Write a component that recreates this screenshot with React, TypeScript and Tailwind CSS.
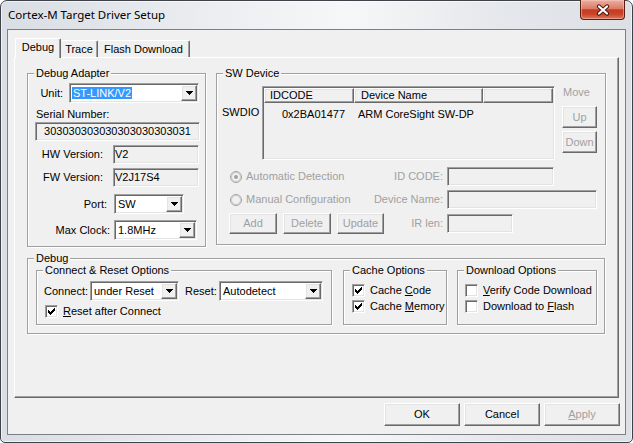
import React from 'react';

const raised =
  'border border-t-white border-l-white border-r-[#696969] border-b-[#696969] shadow-[inset_-1px_-1px_0_#a0a0a0,inset_1px_1px_0_#e3e3e3]';
const sunken =
  'border border-t-[#a0a0a0] border-l-[#a0a0a0] border-r-white border-b-white shadow-[inset_1px_1px_0_#696969,inset_-1px_-1px_0_#e3e3e3]';

const checkRows = ['......#', '.....##', '#...###', '##.###.', '#####..', '.###...', '..#....'];

function Group({ label, className = '', children }: { label: string; className?: string; children?: React.ReactNode }) {
  return (
    <div className={`relative shrink-0 border border-[#a0a0a0] shadow-[inset_1px_1px_0_#fff,1px_1px_0_#fff] ${className}`}>
      <span className="absolute -top-[7px] left-[6px] bg-[#f0f0f0] px-[2px] whitespace-nowrap">{label}</span>
      {children}
    </div>
  );
}

function Arrow() {
  return (
    <svg width="7" height="4" viewBox="0 0 7 4" shapeRendering="crispEdges">
      <path d="M0 0h7v1h-1v1h-1v1h-1v1h-1v-1h-1v-1h-1v-1h-1z" fill="#000" />
    </svg>
  );
}

function Combo({ className = '', children }: { className?: string; children: React.ReactNode }) {
  return (
    <div className={`${sunken} flex h-[20px] shrink-0 items-center bg-white p-px ${className}`}>
      <div className="flex-1 overflow-hidden whitespace-nowrap pl-[2px]">{children}</div>
      <div className={`${raised} flex h-[16px] w-[16px] items-center justify-center bg-[#f0f0f0]`}>
        <Arrow />
      </div>
    </div>
  );
}

function TextBox({ className = '', children }: { className?: string; children?: React.ReactNode }) {
  return (
    <div className={`${sunken} flex h-[19px] shrink-0 items-center whitespace-nowrap bg-[#f0f0f0] px-[2px] ${className}`}>
      {children}
    </div>
  );
}

function Btn({ className = '', disabled, children }: { className?: string; disabled?: boolean; children: React.ReactNode }) {
  return (
    <div
      className={`${raised} flex shrink-0 items-center justify-center bg-[#f0f0f0] ${disabled ? 'text-[#a0a0a0]' : 'text-black'} ${className}`}
    >
      {children}
    </div>
  );
}

function Check({ checked }: { checked?: boolean }) {
  return (
    <div className={`${sunken} flex h-[13px] w-[13px] shrink-0 items-center justify-center bg-white`}>
      {checked && (
        <svg width="7" height="7" viewBox="0 0 7 7" shapeRendering="crispEdges">
          {checkRows.map((row, y) =>
            row.split('').map((c, x) => (c === '#' ? <rect key={`${x}-${y}`} x={x} y={y} width="1" height="1" fill="#000" /> : null))
          )}
        </svg>
      )}
    </div>
  );
}

function CheckRow({ checked, children }: { checked?: boolean; children: React.ReactNode }) {
  return (
    <div className="flex h-[16px] items-center">
      <Check checked={checked} />
      <span className="ml-[5px] whitespace-nowrap">{children}</span>
    </div>
  );
}

function Radio({ dot }: { dot?: boolean }) {
  return (
    <svg width="12" height="12" viewBox="0 0 12 12" className="shrink-0">
      <circle cx="6" cy="6" r="5.5" fill="#f0f0f0" stroke="#a0a0a0" />
      <circle cx="6" cy="6" r="4.5" fill="none" stroke="#c8c8c8" />
      {dot && <circle cx="6" cy="6" r="2" fill="#a0a0a0" />}
    </svg>
  );
}

function ListView() {
  return (
    <div className={`${sunken} h-[74px] w-[293px] shrink-0 bg-[#f0f0f0] p-px`}>
      <div className="flex h-[15px]">
        <div className={`${raised} flex w-[90px] items-center pl-[5px]`}>IDCODE</div>
        <div className={`${raised} flex w-[129px] items-center pl-[6px]`}>Device Name</div>
        <div className={`${raised} flex-1`} />
      </div>
      <div className="mt-[5px] flex">
        <div className="w-[90px] pr-[9px] text-right">0x2BA01477</div>
        <div className="pl-[4px]">ARM CoreSight SW-DP</div>
      </div>
    </div>
  );
}

function CloseButton() {
  return (
    <div className="-mt-px mr-[7px] flex h-[20px] w-[45px] items-center justify-center rounded-b-[4px] border border-t-0 border-[#5b1c12] bg-[linear-gradient(#eab0a2,#dc7b66_45%,#c63b20_52%,#c9452b_75%,#dc7a5a)] shadow-[inset_0_0_0_1px_rgba(255,210,200,0.45)]">
      <svg width="14" height="12" viewBox="0 0 14 12">
        <path d="M3 2.5L11 9.5M11 2.5L3 9.5" stroke="#4a150d" strokeWidth="4.2" strokeLinecap="round" />
        <path d="M3 2.5L11 9.5M11 2.5L3 9.5" stroke="#ffffff" strokeWidth="2.3" strokeLinecap="round" />
      </svg>
    </div>
  );
}

export default function App() {
  return (
    <div className="h-[443px] w-[633px] rounded-t-[7px] rounded-b-[5px] border border-[#3f4349] bg-[linear-gradient(90deg,#d9dee4_0%,#eceef1_35%,#f6f7f8_55%,#e4e7eb_80%,#dce0e5_100%)] font-['Liberation_Sans',Arial,sans-serif] text-[11px] leading-[13px] text-black shadow-[inset_0_0_0_1px_rgba(255,255,255,0.6)]">
      <div className="flex h-[28px] items-start justify-between">
        <div className="pl-[7px] pt-[6px] font-['Noto_Sans',sans-serif] text-[11.5px] leading-[16px]">
          Cortex-M Target Driver Setup
        </div>
        <CloseButton />
      </div>

      <div className="mx-[6px] flex h-[406px] flex-col border border-[#7b8087] bg-[#f0f0f0] pl-[6px] pr-[5px] pt-[8px]">
        {/* tabs */}
        <div className="relative z-10 flex items-end pl-px">
          <div className="flex h-[20px] w-[46px] items-center justify-center rounded-t-[2px] border-l border-r border-t border-l-white border-r-[#696969] border-t-white bg-[#f0f0f0] pb-[2px] shadow-[inset_-1px_0_0_#a0a0a0]">
            Debug
          </div>
          <div className="mb-px flex h-[17px] w-[37px] items-center justify-center rounded-t-[2px] border-r border-t border-r-[#696969] border-t-white shadow-[inset_-1px_0_0_#a0a0a0]">
            Trace
          </div>
          <div className="mb-px flex h-[17px] w-[92px] items-center justify-center rounded-t-[2px] border-r border-t border-r-[#696969] border-t-white shadow-[inset_-1px_0_0_#a0a0a0]">
            Flash Download
          </div>
        </div>

        {/* panel */}
        <div className="-mt-px h-[341px] w-[605px] border border-b-[#696969] border-l-white border-r-[#696969] border-t-white pl-[12px] pt-[15px] shadow-[inset_-1px_-1px_0_#a0a0a0]">
          <div className="flex items-start gap-[10px]">
            <Group label="Debug Adapter" className="h-[174px] w-[179px]">
              <div className="pt-[9px]">
                <div className="flex h-[20px] items-center">
                  <span className="w-[35px] text-right">Unit:</span>
                  <Combo className="ml-[6px] w-[130px]">
                    <span className="-ml-px bg-[#3399ff] px-px text-white">ST-LINK/V2</span>
                  </Combo>
                </div>
                <div className="mt-[5px] pl-[8px]">Serial Number:</div>
                <TextBox className="ml-[7px] mt-px w-[165px] justify-center">303030303030303030303031</TextBox>
                <div className="mt-[4px] flex items-center">
                  <span className="w-[75px] text-right">HW Version:</span>
                  <TextBox className="ml-[10px] w-[86px] !pl-px">V2</TextBox>
                </div>
                <div className="mt-[4px] flex items-center">
                  <span className="w-[75px] text-right">FW Version:</span>
                  <TextBox className="ml-[10px] w-[86px] !pl-px">V2J17S4</TextBox>
                </div>
                <div className="mt-[7px] flex items-center">
                  <span className="w-[79px] text-right">Port:</span>
                  <Combo className="ml-[7px] w-[70px]">SW</Combo>
                </div>
                <div className="mt-[6px] flex items-center">
                  <span className="w-[82px] text-right">Max Clock:</span>
                  <Combo className="ml-[4px] w-[83px]">1.8MHz</Combo>
                </div>
              </div>
            </Group>

            <Group label="SW Device" className="h-[172px] w-[390px]">
              <div className="mt-[12px] flex items-start">
                <div className="mt-[20px] w-[45px] pl-[5px]">SWDIO</div>
                <ListView />
                <div className="ml-[7px] flex w-[35px] flex-col">
                  <div className="pl-px text-[#a0a0a0]">Move</div>
                  <Btn className="mt-[7px] h-[22px] w-[35px]" disabled>Up</Btn>
                  <Btn className="mt-[3px] h-[22px] w-[35px]" disabled>Down</Btn>
                </div>
              </div>
              <div className="mt-[7px] flex h-[19px] items-center text-[#a0a0a0]">
                <div className="flex w-[168px] items-center pl-[13px]">
                  <Radio dot />
                  <span className="ml-[4px] whitespace-nowrap">Automatic Detection</span>
                </div>
                <div className="flex w-[58px] justify-end whitespace-nowrap">ID CODE:</div>
                <TextBox className="ml-[4px] w-[107px]" />
              </div>
              <div className="mt-[4px] flex h-[19px] items-center text-[#a0a0a0]">
                <div className="flex w-[168px] items-center pl-[13px]">
                  <Radio />
                  <span className="ml-[4px] whitespace-nowrap">Manual Configuration</span>
                </div>
                <div className="flex w-[58px] justify-end whitespace-nowrap">Device Name:</div>
                <TextBox className="ml-[4px] w-[150px]" />
              </div>
              <div className="mt-[4px] flex h-[21px] items-center text-[#a0a0a0]">
                <div className="flex w-[168px] gap-[6px] pl-[12px]">
                  <Btn className="h-[21px] w-[48px]" disabled>Add</Btn>
                  <Btn className="h-[21px] w-[48px]" disabled>Delete</Btn>
                  <Btn className="h-[21px] w-[47px]" disabled>Update</Btn>
                </div>
                <div className="flex w-[58px] justify-end whitespace-nowrap">IR len:</div>
                <TextBox className="ml-[4px] w-[66px]" />
              </div>
            </Group>
          </div>

          <Group label="Debug" className="mt-[11px] h-[76px] w-[578px]">
            <div className="mt-[11px] flex pl-[8px]">
              <Group label="Connect & Reset Options" className="h-[55px] w-[296px]">
                <div className="mt-[10px] flex h-[20px] items-center pl-[7px]">
                  <span className="w-[46px]">Connect:</span>
                  <Combo className="w-[89px]">under Reset</Combo>
                  <span className="ml-[6px] w-[34px]">Reset:</span>
                  <Combo className="w-[104px]">Autodetect</Combo>
                </div>
                <div className="mt-[4px] flex h-[13px] items-center pl-[8px]">
                  <Check checked />
                  <span className="ml-[5px]">
                    <span className="underline">R</span>eset after Connect
                  </span>
                </div>
              </Group>
              <Group label="Cache Options" className="ml-[11px] h-[55px] w-[104px]">
                <div className="pl-[8px] pt-[11px]">
                  <CheckRow checked>
                    Cache <span className="underline">C</span>ode
                  </CheckRow>
                  <CheckRow checked>
                    Cache <span className="underline">M</span>emory
                  </CheckRow>
                </div>
              </Group>
              <Group label="Download Options" className="ml-[10px] h-[55px] w-[140px]">
                <div className="pl-[7px] pt-[11px]">
                  <CheckRow>
                    <span className="underline">V</span>erify Code Download
                  </CheckRow>
                  <CheckRow>
                    Download to <span className="underline">F</span>lash
                  </CheckRow>
                </div>
              </Group>
            </div>
          </Group>
        </div>

        {/* dialog buttons */}
        <div className="mt-[5px] flex justify-end gap-[4px]">
          <Btn className="h-[23px] w-[76px]">OK</Btn>
          <Btn className="h-[23px] w-[76px]">Cancel</Btn>
          <Btn className="h-[23px] w-[76px]" disabled>
            <span className="underline">A</span>pply
          </Btn>
        </div>
      </div>
    </div>
  );
}
